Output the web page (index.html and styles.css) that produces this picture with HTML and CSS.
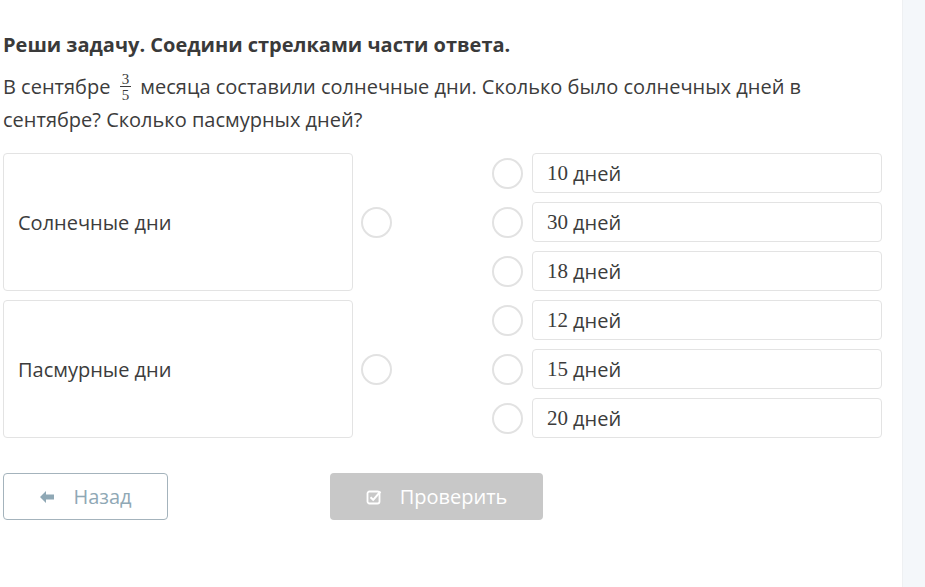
FILE: index.html
```html
<!DOCTYPE html>
<html lang="ru">
<head>
<meta charset="utf-8">
<link rel="stylesheet" href="styles.css">
</head>
<body>
<div class="page">
  <main class="content">
    <h1 class="title">Реши задачу. Соедини стрелками части ответа.</h1>
    <p class="question">В сентябре <span class="frac"><span class="num">3</span><span class="den">5</span></span> месяца составили солнечные дни. Сколько было солнечных дней в сентябре? Сколько пасмурных дней?</p>
    <div class="match">
      <div class="left">
        <div class="lrow"><div class="lcard">Солнечные дни</div><span class="dot"></span></div>
        <div class="lrow"><div class="lcard">Пасмурные дни</div><span class="dot"></span></div>
      </div>
      <div class="right">
        <div class="rrow"><span class="dot"></span><div class="rcard"><span class="n">10</span> дней</div></div>
        <div class="rrow"><span class="dot"></span><div class="rcard"><span class="n">30</span> дней</div></div>
        <div class="rrow"><span class="dot"></span><div class="rcard"><span class="n">18</span> дней</div></div>
        <div class="rrow"><span class="dot"></span><div class="rcard"><span class="n">12</span> дней</div></div>
        <div class="rrow"><span class="dot"></span><div class="rcard"><span class="n">15</span> дней</div></div>
        <div class="rrow"><span class="dot"></span><div class="rcard"><span class="n">20</span> дней</div></div>
      </div>
    </div>
    <div class="actions">
      <button class="btn back"><svg class="ico" width="16" height="14" viewBox="0 0 16 14"><path d="M7 1 L1 7 L7 13 L7 9.5 L15 9.5 L15 4.5 L7 4.5 Z" fill="#8fa8b5"/></svg><span>Назад</span></button>
      <button class="btn check"><svg class="ico" width="16" height="16" viewBox="0 0 16 16"><rect x="1.5" y="2.5" width="12" height="12" rx="2" fill="none" stroke="#fff" stroke-width="1.8"/><path d="M4.5 8.2 L7.2 10.8 L14.5 2.5" fill="none" stroke="#fff" stroke-width="2"/></svg><span>Проверить</span></button>
    </div>
  </main>
  <aside class="side"></aside>
</div>
</body>
</html>
```
FILE: styles.css
```css
* { box-sizing: border-box; }
html, body { margin: 0; padding: 0; background: #fff; }
body { font-family: "Open Sans", "Noto Sans", sans-serif; color: #3c3c3c; }
.page { display: flex; width: 925px; height: 587px; overflow: hidden; }
.content { width: 903px; padding: 0 0 0 3px; border-right: 1px solid #eef0f2; }
.side { flex: 1; background: #f4f7fa; }
.title { margin: 32px 0 0; font-size: 20px; font-weight: 700; line-height: 26px; color: #3a3a3a; }
.question { margin: 12px 0 0; width: 820px; font-size: 20px; line-height: 33px; color: #3c3c3c; }
.frac { display: inline-flex; flex-direction: column; align-items: center; vertical-align: middle; font-family: "Liberation Serif", serif; font-size: 15px; line-height: 12px; margin: 0 4px; position: relative; top: -2px; }
.frac .num { border-bottom: 1px solid #3c3c3c; padding: 0 2px 1px; }
.frac .den { padding-top: 2px; }
.match { display: flex; margin-top: 17px; width: 879px; justify-content: space-between; }
.left { display: flex; flex-direction: column; gap: 9px; }
.lrow { display: flex; align-items: center; gap: 8px; }
.lcard { width: 350px; height: 138px; border: 1px solid #e3e3e3; border-radius: 4px; display: flex; align-items: center; padding: 0 0 0 14px; font-size: 20px; color: #3c3c3c; }
.dot { width: 31px; height: 31px; border: 2px solid #e2e2e2; border-radius: 50%; flex: none; }
.right { display: flex; flex-direction: column; gap: 9px; }
.rrow { display: flex; align-items: center; gap: 9px; }
.rcard { width: 350px; height: 40px; border: 1px solid #e3e3e3; border-radius: 4px; display: flex; align-items: center; padding-left: 14px; font-size: 20px; color: #3c3c3c; }
.rcard .n { font-family: "Liberation Serif", serif; font-size: 21px; margin-right: 5px; }
.actions { display: flex; gap: 162px; margin-top: 35px; }
.btn { height: 47px; border-radius: 4px; font-family: "Open Sans", sans-serif; font-size: 20px; display: flex; align-items: center; justify-content: center; gap: 18px; cursor: pointer; }
.back { width: 165px; background: #fff; border: 1px solid #a4b3bc; color: #8fa8b5; }
.check { width: 213px; background: #c8c8c8; border: none; color: #fff; }
.ico { flex: none; }
```
